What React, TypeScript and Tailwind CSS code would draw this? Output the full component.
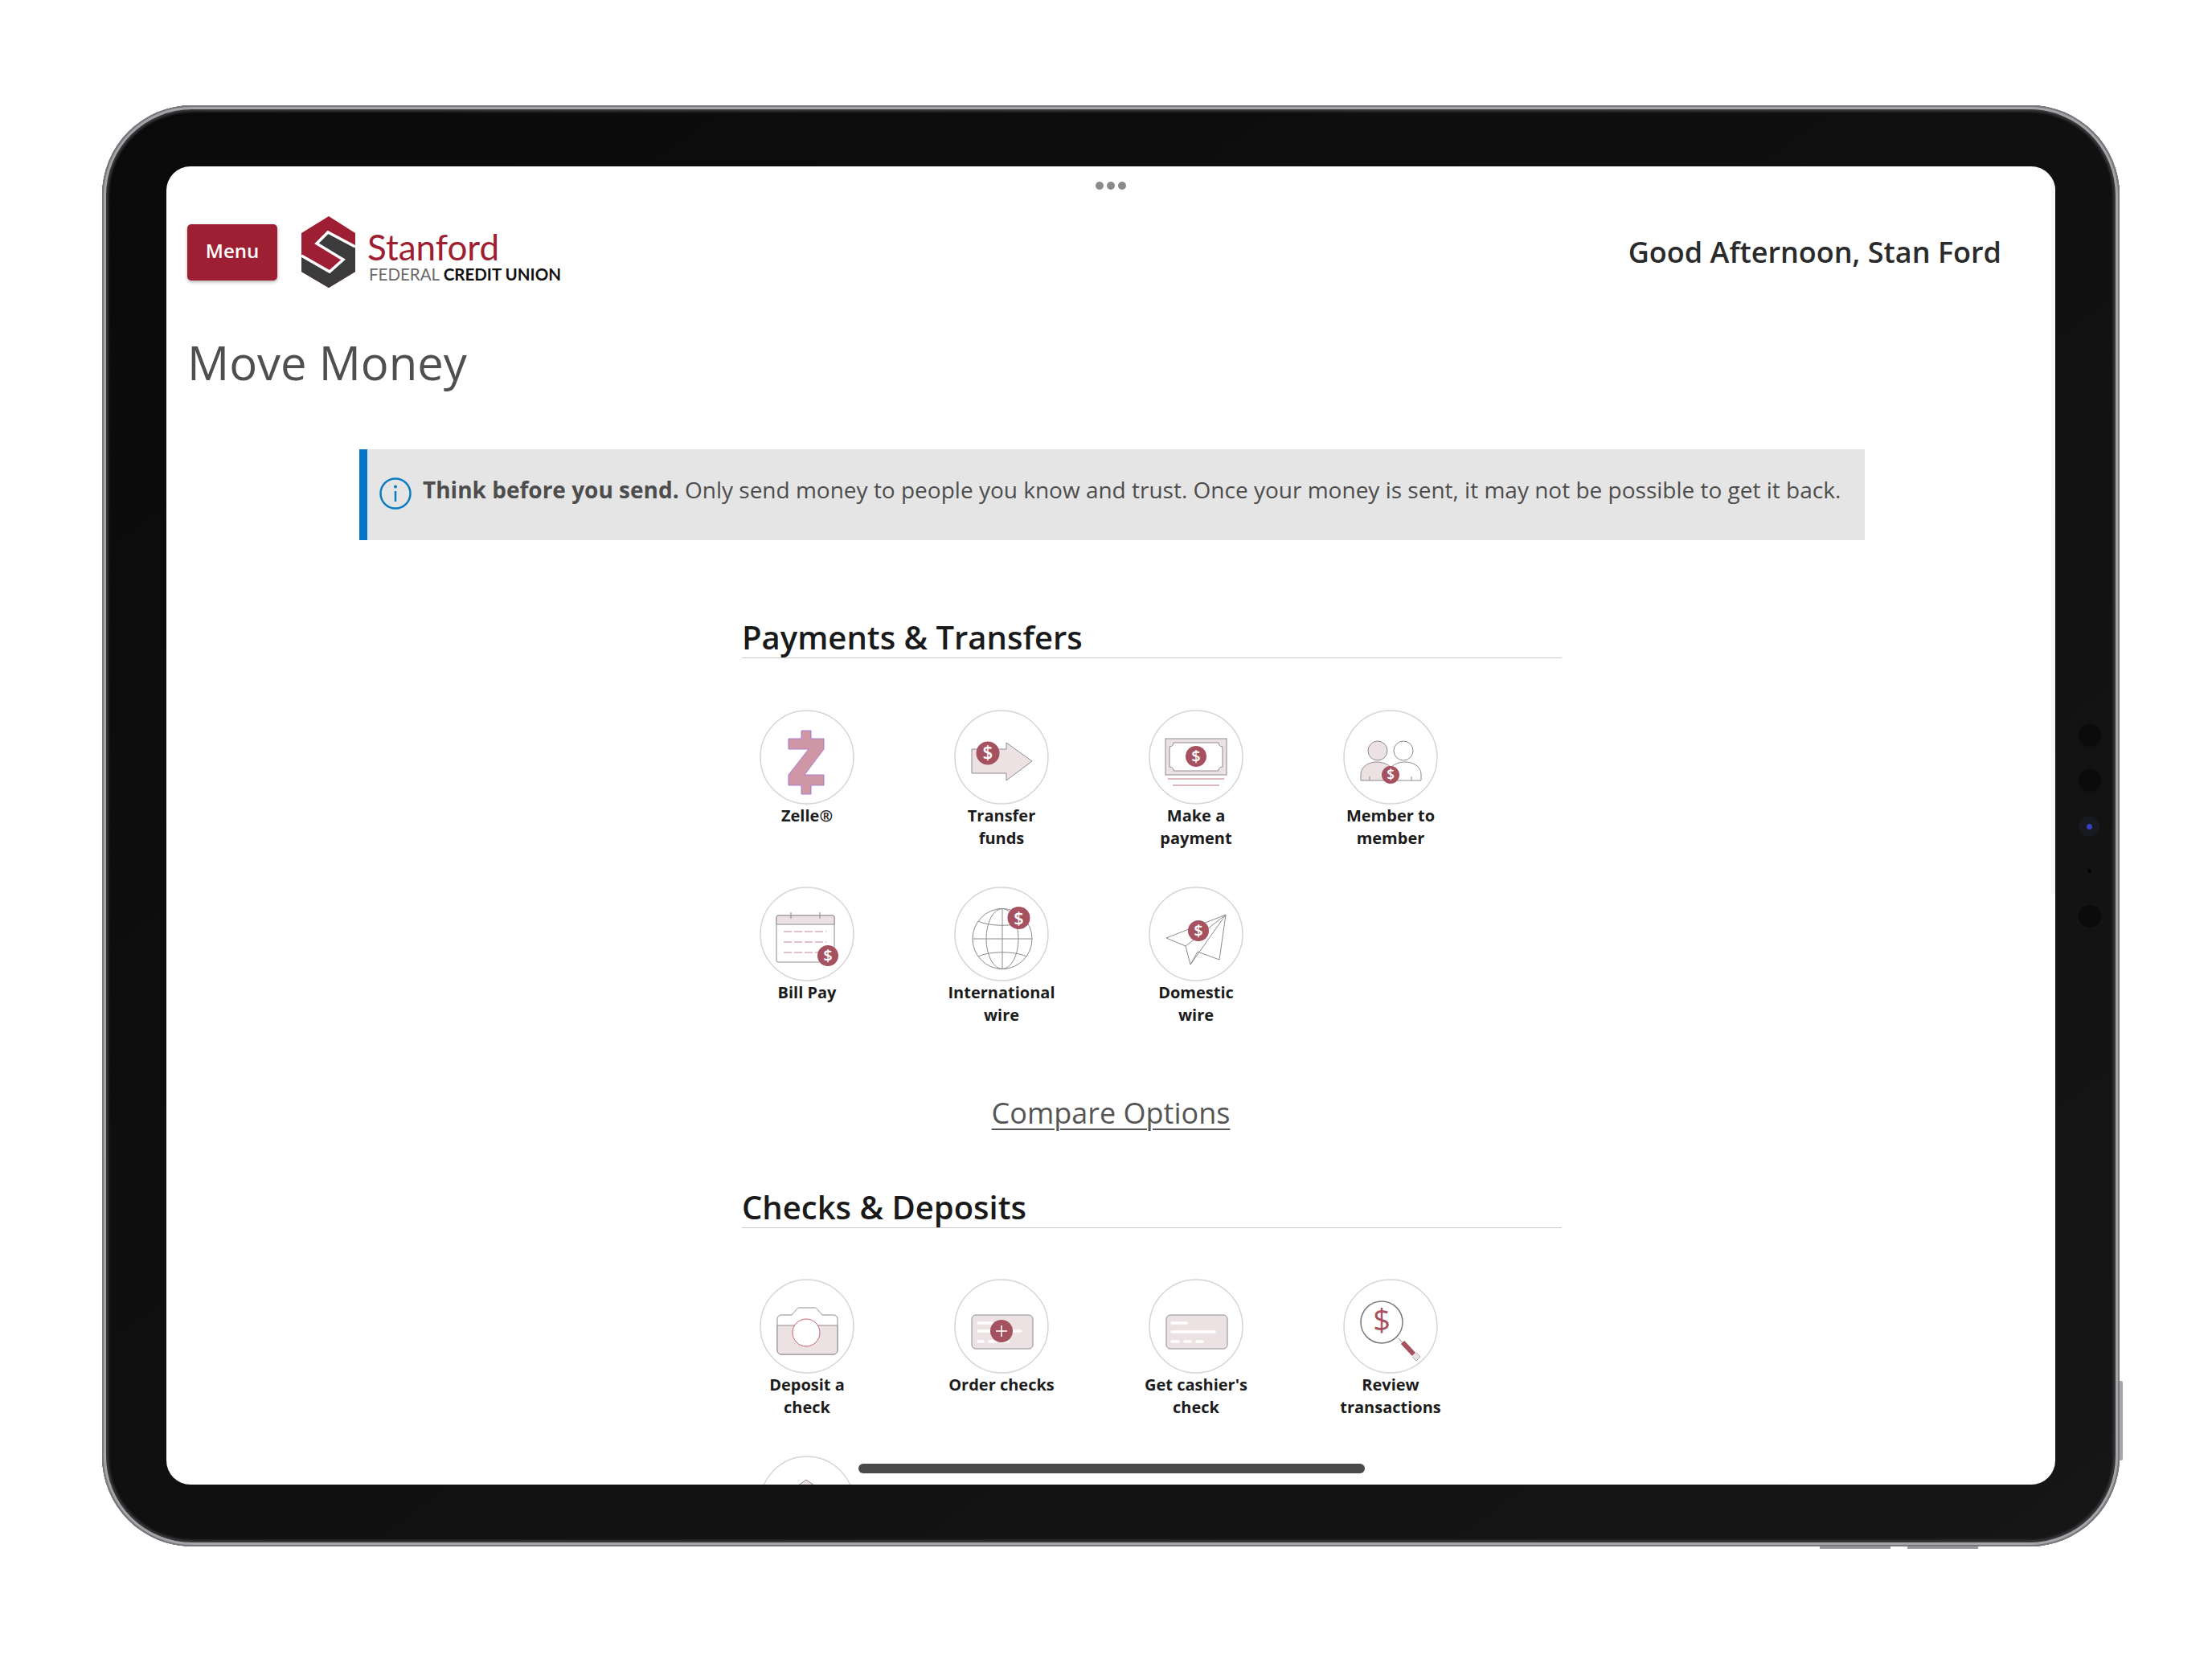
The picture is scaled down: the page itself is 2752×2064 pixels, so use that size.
import type { ReactNode } from 'react';

// Shared drawing colours for the icon set
const RED = '#a5515f';
const TINT = '#ece2e3';
const LINE = '#8f8a8b';

function Badge({ x, y, r }: { x: number; y: number; r: number }) {
  return (
    <g>
      <circle cx={x} cy={y} r={r} fill={RED} />
      <text x={x} y={y + r * 0.56} textAnchor="middle" fontSize={r * 1.55} fontWeight="600" fill="#fff" fontFamily="Open Sans, sans-serif">
        $
      </text>
    </g>
  );
}

const ZelleIcon = (
  <path
    d="M52 26H64V36H80V49L56 81H80V94H64V105H52V94H36V81L61 49H36V36H52Z"
    fill="#cf97a6"
    stroke="#a77dd0"
    strokeWidth="1"
    strokeLinejoin="round"
  />
);

const TransferIcon = (
  <g>
    <path d="M22 49H65V41L97 64L65 88V79H22Z" fill={TINT} stroke={LINE} strokeWidth="1" strokeLinejoin="round" />
    <Badge x={42} y={54} r={14.5} />
  </g>
);

const PaymentIcon = (
  <g>
    <rect x="21" y="36" width="76" height="45" fill={TINT} stroke={LINE} strokeWidth="1" />
    <path
      d="M31 41H87C87 44 89 46 92 46V71C89 71 87 73 87 76H31C31 73 29 71 26 71V46C29 46 31 44 31 41Z"
      fill="#fff"
      stroke={LINE}
      strokeWidth="1"
    />
    <Badge x={59} y={58} r={13} />
    <path d="M24 86H94M30 94H88" stroke="#b8717e" strokeWidth="1" />
  </g>
);

const MemberIcon = (
  <g>
    <circle cx="43" cy="51" r="12" fill={TINT} stroke={LINE} strokeWidth="1" />
    <circle cx="75" cy="51" r="12" fill="#fff" stroke={LINE} strokeWidth="1" />
    <path d="M22 88V80C22 71 32 65 41 65C50 65 56 68 60 72V88Z" fill={TINT} stroke={LINE} strokeWidth="1" />
    <path d="M97 88V80C97 71 87 65 78 65C69 65 63 68 59 72V88Z" fill="#fff" stroke={LINE} strokeWidth="1" />
    <path d="M33 83V88M85 83V88" stroke={LINE} strokeWidth="1" />
    <Badge x={59} y={81} r={11} />
  </g>
);

const BillPayIcon = (
  <g>
    <rect x="21" y="36" width="72" height="58" rx="2" fill="#fff" stroke={LINE} strokeWidth="1" />
    <path d="M23 36H91A2 2 0 0 1 93 38V47H21V38A2 2 0 0 1 23 36Z" fill={TINT} stroke={LINE} strokeWidth="1" />
    <path d="M39 32V40M75 32V40" stroke={LINE} strokeWidth="1" />
    <path d="M30 56H83M30 69H83M30 82H83" stroke="#c48592" strokeWidth="1" strokeDasharray="10 3" />
    <Badge x={85} y={86} r={13} />
  </g>
);

const GlobeIcon = (
  <g>
    <g fill="none" stroke={LINE} strokeWidth="1">
      <ellipse cx="60" cy="65" rx="37" ry="37.5" />
      <ellipse cx="60" cy="65" rx="20" ry="37.5" />
      <path d="M60 28V102M23 65H97M30 43C44 50 76 50 90 43M30 87C44 80 76 80 90 87" />
    </g>
    <Badge x={80.5} y={39} r={14} />
  </g>
);

const PlaneIcon = (
  <g>
    <path
      d="M96 35L22 64L46 74L52 97L61 81L88 91ZM46 74L96 35M52 97L96 35"
      fill="none"
      stroke={LINE}
      strokeWidth="1"
      strokeLinejoin="round"
    />
    <Badge x={62} y={55} r={13} />
  </g>
);

const CameraIcon = (
  <g>
    <path
      d="M27 45H40L46 38C47 37 48 36 50 36H68C70 36 71 37 72 38L78 45H92A5 5 0 0 1 97 50V89A5 5 0 0 1 92 94H27A5 5 0 0 1 22 89V50A5 5 0 0 1 27 45Z"
      fill="#fff"
      stroke={LINE}
      strokeWidth="1"
    />
    <path d="M22 58H97V89A5 5 0 0 1 92 94H27A5 5 0 0 1 22 89Z" fill={TINT} stroke={LINE} strokeWidth="1" />
    <circle cx="58" cy="67" r="17" fill="#fff" stroke="#c9606f" strokeWidth="1" />
  </g>
);

const OrderChecksIcon = (
  <g>
    <rect x="22" y="45" width="76" height="42" rx="5" fill={TINT} stroke={LINE} strokeWidth="1" />
    <path d="M30 55H47M30 65H83M30 78H36M44 78H52M59 78H67" stroke="#fff" strokeWidth="3.5" strokeLinecap="round" />
    <circle cx="59" cy="65" r="14" fill={RED} />
    <path d="M52 65H66M59 58V72" stroke="#fff" strokeWidth="1.5" />
  </g>
);

const CashierIcon = (
  <g>
    <rect x="22" y="45" width="76" height="42" rx="5" fill={TINT} stroke={LINE} strokeWidth="1" />
    <path d="M29 55H47M29 66H82M29 78H37M45 78H52M60 78H67" stroke="#fff" strokeWidth="3.5" strokeLinecap="round" />
  </g>
);

const ReviewIcon = (
  <g>
    <circle cx="48" cy="54" r="26" fill="#fff" stroke="#7c7a7a" strokeWidth="1.5" />
    <text x="48" y="65" textAnchor="middle" fontSize="38" fill={RED} fontFamily="Open Sans, sans-serif">
      $
    </text>
    <path d="M69 74L75 81" stroke={LINE} strokeWidth="1" />
    <path d="M74 79L88 94" stroke={RED} strokeWidth="6" />
    <path d="M88 94L93 99" stroke={TINT} strokeWidth="6" />
    <path d="M91 92L96 97L91 102L86 97" fill="none" stroke={LINE} strokeWidth="0.8" />
  </g>
);

const HouseIcon = (
  <path d="M58 30L82 47V90H34V47Z" fill={TINT} stroke={LINE} strokeWidth="1" />
);

function Tile({ icon, lines = [] }: { icon: ReactNode; lines?: string[] }) {
  return (
    <div className="flex h-[220px] flex-col items-center">
      <svg width="118" height="118" viewBox="0 0 118 118" className="shrink-0">
        <circle cx="59" cy="59" r="58" fill="#fff" stroke="#d6d4d4" strokeWidth="1.5" />
        {icon}
      </svg>
      <div className="text-center text-[20px] leading-[28px] font-bold text-[#1c1c1c]">
        {lines.map((line) => (
          <div key={line}>{line}</div>
        ))}
      </div>
    </div>
  );
}

function SectionHeading({ children }: { children: ReactNode }) {
  return (
    <h2 className="ml-[40px] h-[55px] w-[1020px] border-b border-[#c9c9c9] pt-[2px] text-[40px] leading-[54px] font-semibold text-[#1a1a1a]">
      {children}
    </h2>
  );
}

function Logo() {
  return (
    <div className="flex items-center gap-[14px]">
      <svg width="68" height="89" viewBox="0 0 68 89">
        <path d="M34 0L67 21V69L34 89L0 69V21Z" fill="#9e1f33" />
        <path d="M67 38L33 20L19 34L52 54L35 69L0 49V69L34 89L67 69Z" fill="#3b3b3b" />
        <path d="M67 38L33 20L19 34L52 54L35 69L0 49" fill="none" stroke="#fff" strokeWidth="3.5" />
      </svg>
      <div className="flex flex-col pt-[13px]">
        <div className="font-['Lato',sans-serif] text-[44px] leading-[40px] text-[#9e1f33]">Stanford</div>
        <div className="mt-[2px] ml-[2px] font-['Lato',sans-serif] text-[20.5px] leading-[24px] whitespace-nowrap">
          <span className="text-[#6a6a6a]">FEDERAL </span>
          <span className="font-bold text-[#111]">CREDIT UNION</span>
        </div>
      </div>
    </div>
  );
}

export default function App() {
  return (
    <div className="h-[2064px] w-[2752px] overflow-hidden bg-white pt-[131px] pl-[127px] font-['Open_Sans',sans-serif]">
      {/* Tablet body */}
      <div className="relative h-[1793px] w-[2510px] rounded-[112px] bg-gradient-to-br from-[#0a0a0a] to-[#161616] px-[80px] pt-[76px] shadow-[inset_0_0_0_2px_#77777c,inset_0_0_0_5px_#a4a4a9,inset_0_0_3px_8px_#3a3a3c]">
        {/* Hardware buttons */}
        <div className="absolute top-[1587px] -right-[4px] h-[99px] w-[4px] rounded-r-[2px] bg-[#a5a5aa]" />
        <div className="absolute -bottom-[3px] left-[2137px] h-[3px] w-[88px] bg-[#9a9a9f]" />
        <div className="absolute -bottom-[3px] left-[2246px] h-[3px] w-[88px] bg-[#9a9a9f]" />

        {/* Camera and sensors in the bezel */}
        <div className="absolute top-[770px] left-[2459px] h-[28px] w-[28px] rounded-full bg-[#0b0b0b]" />
        <div className="absolute top-[826px] left-[2459px] h-[28px] w-[28px] rounded-full bg-[#0b0b0b]" />
        <div className="absolute top-[884px] left-[2459px] flex h-[26px] w-[26px] items-center justify-center rounded-full bg-[#191920]">
          <div className="h-[7px] w-[7px] rounded-full bg-[#3a3fc0]" />
        </div>
        <div className="absolute top-[950px] left-[2470px] h-[5px] w-[5px] rounded-full bg-[#050505]" />
        <div className="absolute top-[995px] left-[2459px] h-[28px] w-[28px] rounded-full bg-[#0b0b0b]" />

        {/* Screen */}
        <div className="relative h-[1640px] w-[2350px] overflow-hidden rounded-[30px] bg-white">
          <div className="absolute top-[19px] left-1/2 flex -translate-x-1/2 gap-[4px]">
            <div className="h-[10px] w-[10px] rounded-full bg-[#8a8a8a]" />
            <div className="h-[10px] w-[10px] rounded-full bg-[#8a8a8a]" />
            <div className="h-[10px] w-[10px] rounded-full bg-[#8a8a8a]" />
          </div>
          <div className="absolute top-0 right-0 h-[905px] w-[5px] bg-[#f7f7f7]" />
          <div className="absolute top-[1614px] left-[861px] h-[12px] w-[630px] rounded-full bg-[#4a4a4a]" />

          {/* Header */}
          <header className="flex items-center justify-between pt-[62px] pr-[67px] pl-[26px]">
            <div className="flex items-center gap-[30px]">
              <button className="h-[70px] w-[112px] rounded-[5px] bg-[#9e1f33] pb-[3px] text-[24px] font-semibold text-white shadow-[0_2px_4px_rgba(0,0,0,0.3)]">
                Menu
              </button>
              <Logo />
            </div>
            <div className="text-[36px] font-semibold text-[#2b2b2b]">Good Afternoon, Stan Ford</div>
          </header>

          <h1 className="mt-[55px] ml-[26px] text-[58px] leading-[76px] font-normal text-[#4f4f4f]">Move Money</h1>

          {/* Notice */}
          <div className="mt-[70px] ml-[240px] flex h-[113px] w-[1873px] items-center gap-[14px] border-l-[10px] border-[#0077c8] bg-[#e5e5e5] pb-[14px] pl-[15px]">
            <svg width="40" height="40" viewBox="0 0 40 40" className="mt-[10px] shrink-0">
              <circle cx="20" cy="20" r="18.5" fill="none" stroke="#0a7cc4" strokeWidth="2.5" />
              <circle cx="20" cy="11.5" r="2" fill="#0a7cc4" />
              <path d="M20 17V30" stroke="#0a7cc4" strokeWidth="2.5" />
            </svg>
            <p className="text-[28px] leading-[40px] whitespace-nowrap text-[#4d4d4d]">
              <span className="font-bold">Think before you send.</span> Only send money to people you know and trust.
              Once your money is sent, it may not be possible to get it back.
            </p>
          </div>

          {/* Payments and transfers */}
          <section className="mt-[92px] ml-[676px]">
            <SectionHeading>Payments &amp; Transfers</SectionHeading>
            <div className="mt-[64px] grid grid-cols-[repeat(4,242px)]">
              <Tile icon={ZelleIcon} lines={['Zelle®']} />
              <Tile icon={TransferIcon} lines={['Transfer', 'funds']} />
              <Tile icon={PaymentIcon} lines={['Make a', 'payment']} />
              <Tile icon={MemberIcon} lines={['Member to', 'member']} />
              <Tile icon={BillPayIcon} lines={['Bill Pay']} />
              <Tile icon={GlobeIcon} lines={['International', 'wire']} />
              <Tile icon={PlaneIcon} lines={['Domestic', 'wire']} />
            </div>
          </section>

          <div className="mt-[36px] text-center text-[36px] leading-[52px] text-[#555] underline decoration-2 underline-offset-[6px]">
            Compare Options
          </div>

          {/* Checks and deposits */}
          <section className="mt-[62px] ml-[676px]">
            <SectionHeading>Checks &amp; Deposits</SectionHeading>
            <div className="mt-[63px] grid grid-cols-[repeat(4,242px)]">
              <Tile icon={CameraIcon} lines={['Deposit a', 'check']} />
              <Tile icon={OrderChecksIcon} lines={['Order checks']} />
              <Tile icon={CashierIcon} lines={["Get cashier's", 'check']} />
              <Tile icon={ReviewIcon} lines={['Review', 'transactions']} />
              <Tile icon={HouseIcon} />
            </div>
          </section>
        </div>
      </div>
    </div>
  );
}
